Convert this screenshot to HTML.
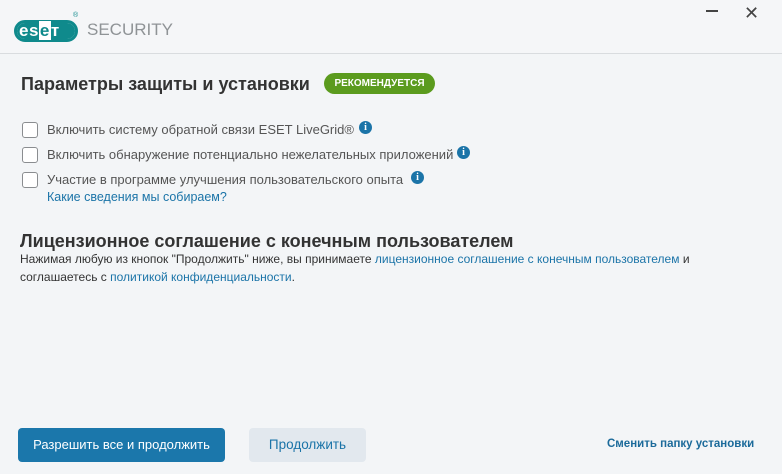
<!DOCTYPE html>
<html><head><meta charset="utf-8"><style>
*{margin:0;padding:0;box-sizing:border-box}
body{width:782px;height:474px;background:#f3f5f7;font-family:"Liberation Sans","DejaVu Sans",sans-serif;position:relative;overflow:hidden;color:#333}
.top{position:absolute;left:0;top:0;width:782px;height:54px;background:#f5f6f8;border-bottom:1px solid #d9dcdf}
.abs{position:absolute;white-space:nowrap}
.cb{position:absolute;left:22px;width:16px;height:16px;border:1.5px solid #8a8d90;border-radius:3px;background:#fff}
.lbl{font-size:13px;color:#555;transform-origin:left center}
.info{position:absolute;width:13px;height:13px;border-radius:50%;background:#1b74a8;color:#fff;font:bold 10px/13px "Liberation Serif",serif;text-align:center}
a{color:#1b74a8;text-decoration:none}
</style></head><body>
<div class="top">
  <div class="abs" style="left:14px;top:20px;width:64px;height:22px;border:3px solid #0f8a8c;border-radius:11px;background:#fff"></div>
  <div class="abs" style="left:17px;top:23px;width:38px;height:16px;background:#0f8a8c;border-radius:8px 0 0 8px"></div>
  <div class="abs" style="left:54px;top:23px;width:21px;height:16px;background:#0f8a8c;border-radius:0 8px 8px 0"></div>
  <div class="abs" style="left:19px;top:21px;font:bold 17px/20px 'Liberation Sans',sans-serif;color:#fff;letter-spacing:0.5px">es<span style="color:#0f8a8c;background:#fff;padding:0 1px">e</span>т</div>
  <div class="abs" style="left:73px;top:12px;font-size:7px;color:#0f8a8c">®</div>
  <div class="abs" style="left:87px;top:20px;font-size:17px;color:#8f9396">SECURITY</div>
  <div class="abs" style="left:706px;top:10px;width:12px;height:1.5px;background:#444"></div>
  <div class="abs" style="left:744px;top:3px;font-size:18px;color:#444">✕</div>
</div>
<div class="abs" style="left:21px;top:74px;font-size:18px;font-weight:bold;color:#333">Параметры защиты и установки</div>
<div class="abs" style="left:324px;top:73px;width:111px;height:21px;border-radius:11px;background:#5b9b1e;color:#fff;font-size:10px;font-weight:bold;line-height:21px;text-align:center">РЕКОМЕНДУЕТСЯ</div>

<div class="cb" style="top:122px"></div>
<div class="abs lbl" style="left:47px;top:122px">Включить систему обратной связи ESET LiveGrid®</div>
<div class="info" style="left:359px;top:121px">i</div>
<div class="cb" style="top:147px"></div>
<div class="abs lbl" style="left:47px;top:147px">Включить обнаружение потенциально нежелательных приложений</div>
<div class="info" style="left:457px;top:146px">i</div>
<div class="cb" style="top:172px"></div>
<div class="abs lbl" style="left:47px;top:172px">Участие в программе улучшения пользовательского опыта</div>
<div class="info" style="left:411px;top:171px">i</div>
<div class="abs" style="left:47px;top:190px;font-size:12.5px"><a>Какие сведения мы собираем?</a></div>

<div class="abs" style="left:20px;top:231px;font-size:18px;font-weight:bold;color:#333">Лицензионное соглашение с конечным пользователем</div>
<div class="abs" style="left:20px;top:252px;font-size:12px;color:#333">Нажимая любую из кнопок "Продолжить" ниже, вы принимаете <a>лицензионное соглашение с конечным пользователем</a> и</div>
<div class="abs" style="left:20px;top:270px;font-size:12px;color:#333">соглашаетесь с <a>политикой конфиденциальности</a>.</div>

<div class="abs" style="left:18px;top:428px;width:207px;height:34px;background:#1b77ab;border-radius:4px;color:#fff;font-size:13px;line-height:34px;text-align:center">Разрешить все и продолжить</div>
<div class="abs" style="left:249px;top:428px;width:117px;height:34px;background:#e2e8ee;border-radius:4px;color:#1b74a8;font-size:13.5px;line-height:34px;text-align:center">Продолжить</div>
<div class="abs" style="left:607px;top:438px;font-size:11.5px;font-weight:bold;color:#1b6a9a">Сменить папку установки</div>
</body></html>
